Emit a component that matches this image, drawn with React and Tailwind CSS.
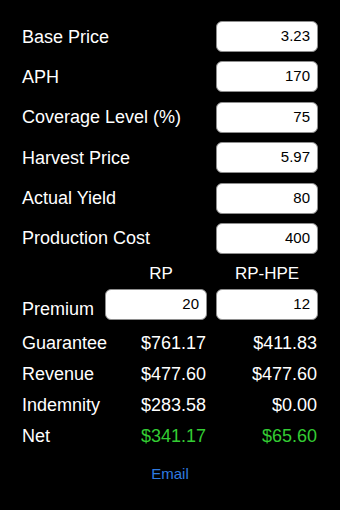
import React from "react";

const inputs = [
  { label: "Base Price", value: "3.23" },
  { label: "APH", value: "170" },
  { label: "Coverage Level (%)", value: "75" },
  { label: "Harvest Price", value: "5.97" },
  { label: "Actual Yield", value: "80" },
  { label: "Production Cost", value: "400" },
];

const results = [
  { label: "Guarantee", rp: "$761.17", hpe: "$411.83" },
  { label: "Revenue", rp: "$477.60", hpe: "$477.60" },
  { label: "Indemnity", rp: "$283.58", hpe: "$0.00" },
  { label: "Net", rp: "$341.17", hpe: "$65.60", green: true },
];

function Field({ value }) {
  return (
    <div className="h-[31px] w-[102px] rounded-[6px] border border-[#8e8e8e] bg-white pr-[7px] pt-[5px] text-right text-[15px] leading-[18px] text-black">
      {value}
    </div>
  );
}

export default function App() {
  return (
    <div
      className="h-[510px] w-[340px] bg-black px-[22px] pt-[21px] text-white"
      style={{ fontFamily: '"Liberation Sans", Arial, sans-serif' }}
    >
      <div className="flex flex-col gap-[9.4px]">
        {inputs.map((row) => (
          <div key={row.label} className="flex h-[31px] items-center justify-between">
            <span className="text-[18px] leading-[22px]">{row.label}</span>
            <Field value={row.value} />
          </div>
        ))}
      </div>

      <div className="mt-[10px] grid grid-cols-[83px_102px_9px_102px] text-[17px] leading-[20px]">
        <span />
        <span className="pl-[10px] text-center">RP</span>
        <span />
        <span className="text-center">RP-HPE</span>
      </div>

      <div className="mt-[5px] grid grid-cols-[83px_102px_9px_102px] items-end">
        <span className="text-[18px] leading-[22px]">Premium</span>
        <Field value="20" />
        <span />
        <Field value="12" />
      </div>

      <div className="mt-[8px]">
        {results.map((row) => (
          <div
            key={row.label}
            className="grid grid-cols-[83px_102px_9px_102px] text-[18px] leading-[31px]"
          >
            <span>{row.label}</span>
            <span className={`pr-[1px] text-right ${row.green ? "text-[#33cc33]" : ""}`}>{row.rp}</span>
            <span />
            <span className={`pr-[1px] text-right ${row.green ? "text-[#33cc33]" : ""}`}>{row.hpe}</span>
          </div>
        ))}
      </div>

      <div className="mt-[12px] text-center text-[15px] leading-[20px] text-[#2f7be0]">Email</div>
    </div>
  );
}
